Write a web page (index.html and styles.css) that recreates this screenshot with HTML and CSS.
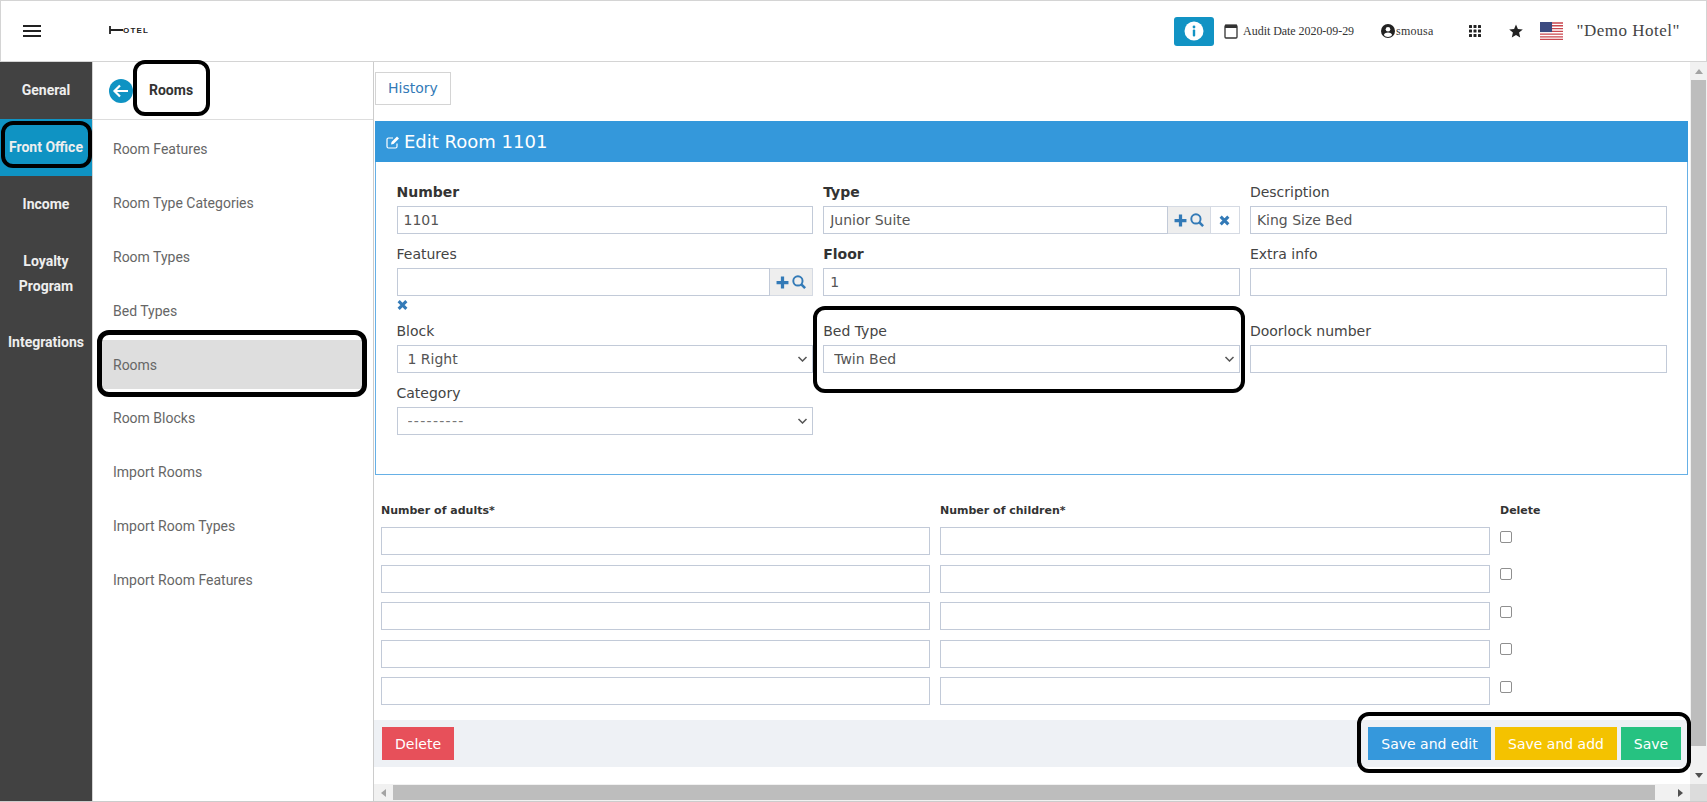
FILE: index.html
```html
<!DOCTYPE html>
<html lang="en">
<head>
<meta charset="utf-8">
<title>Edit Room 1101</title>
<link rel="stylesheet" href="styles.css">
</head>
<body>
<div class="app">
  <header class="topbar">
    <button class="burger" aria-label="Menu"><span></span><span></span><span></span></button>
    <div class="logo">
      <svg class="logo-bed" width="14" height="8" viewBox="0 0 14 8"><path d="M1 0v8M1 4h13" stroke="#222" stroke-width="1.8" fill="none"/></svg>
      <span>OTEL</span>
    </div>
    <div class="top-right">
      <span class="info-btn"><svg width="20" height="20" viewBox="0 0 20 20"><circle cx="10" cy="10" r="9.5" fill="#fff"/><circle cx="10" cy="6" r="1.4" fill="#1193c4"/><rect x="8.8" y="8.6" width="2.4" height="7" rx="1" fill="#1193c4"/></svg></span>
      <span class="audit">
        <svg width="14" height="16" viewBox="0 0 14 16"><rect x="1" y="2.5" width="12" height="12.5" fill="none" stroke="#333" stroke-width="1.3" rx="1"/><rect x="1" y="1.5" width="12" height="3.5" fill="#333"/></svg>
        <span>Audit Date 2020-09-29</span>
      </span>
      <span class="user">
        <svg width="14" height="14" viewBox="0 0 14 14"><circle cx="7" cy="7" r="7" fill="#222"/><circle cx="7" cy="5.2" r="2.3" fill="#fff"/><path d="M2.8 11c.8-1.8 2.5-2.5 4.2-2.5s3.400.7 4.200 2.500c-1 1.200-2.500 1.900-4.200 1.900s-3.200-.7-4.200-1.900z" fill="#fff"/></svg>
        <span>smousa</span>
      </span>
      <svg class="apps" width="12" height="12" viewBox="0 0 12 12" fill="#222"><rect width="3" height="3" rx=".5"/><rect x="4.500" width="3" height="3" rx=".5"/><rect x="9" width="3" height="3" rx=".5"/><rect y="4.500" width="3" height="3" rx=".5"/><rect x="4.500" y="4.500" width="3" height="3" rx=".5"/><rect x="9" y="4.500" width="3" height="3" rx=".5"/><rect y="9" width="3" height="3" rx=".5"/><rect x="4.500" y="9" width="3" height="3" rx=".5"/><rect x="9" y="9" width="3" height="3" rx=".5"/></svg>
      <svg class="star" width="14" height="14" viewBox="0 0 14 14"><path d="M7 .5l1.900 4.500 4.900.4-3.700 3.200 1.100 4.800L7 10.900l-4.200 2.500 1.100-4.800L.2 5.400l4.900-.4z" fill="#222"/></svg>
      <svg class="flag" width="23" height="18" viewBox="0 0 21 17" preserveAspectRatio="none"><rect width="21" height="17" fill="#fff"/><path d="M0 1h21M0 3.600h21M0 6.200h21M0 8.800h21M0 11.400h21M0 14h21M0 16.500h21" stroke="#c9474f" stroke-width="1.300"/><rect width="11" height="9.500" fill="#3c4a80"/></svg>
      <span class="hotel">"Demo Hotel"</span>
    </div>
  </header>

  <div class="body-row">
    <nav class="rail">
      <a class="rail-item">General</a>
      <a class="rail-item is-active">Front Office</a>
      <a class="rail-item">Income</a>
      <a class="rail-item">Loyalty Program</a>
      <a class="rail-item">Integrations</a>
    </nav>

    <aside class="submenu">
      <div class="sub-head">
        <svg class="back" width="24" height="24" viewBox="0 0 24 24"><circle cx="12" cy="12" r="12" fill="#0f93c3"/><path d="M19 12H6M11 6.500L5.500 12l5.500 5.500" stroke="#fff" stroke-width="2.200" fill="none"/></svg>
        <strong>Rooms</strong>
      </div>
      <ul class="sub-list">
        <li>Room Features</li>
        <li>Room Type Categories</li>
        <li>Room Types</li>
        <li>Bed Types</li>
        <li class="is-current">Rooms</li>
        <li>Room Blocks</li>
        <li>Import Rooms</li>
        <li>Import Room Types</li>
        <li>Import Room Features</li>
      </ul>
    </aside>

    <main class="main">
      <div class="main-inner">
        <div class="content">
          <a class="history">History</a>
          <section class="panel">
            <h2 class="panel-title">
              <svg width="14" height="14" viewBox="0 0 14 14" fill="none" stroke="#fff" stroke-width="1.200"><path d="M11 8.500v3a1.500 1.500 0 0 1-1.500 1.500h-7A1.500 1.500 0 0 1 1 11.500v-7A1.500 1.500 0 0 1 2.500 3H7"/><path d="M5.500 7l-.5 2.500 2.500-.5 5.500-5.500-2-2z" fill="#fff" stroke="none"/></svg>
              Edit Room 1101
            </h2>
            <div class="form-grid">
              <div class="field">
                <label class="req">Number</label>
                <input type="text" value="1101">
              </div>
              <div class="field">
                <label class="req">Type</label>
                <div class="combo">
                  <input type="text" value="Junior Suite">
                  <span class="addon">
                    <svg width="13" height="13" viewBox="0 0 12 12"><path d="M6 .5v11M.5 6h11" stroke="#337ab7" stroke-width="3"/></svg>
                    <svg width="14" height="14" viewBox="0 0 13 13" fill="none" stroke="#337ab7" stroke-width="1.800"><circle cx="5.500" cy="5.500" r="4.300"/><path d="M8.700 8.700l3.500 3.500" stroke-width="2.400"/></svg>
                  </span>
                  <span class="clear"><svg width="11" height="11" viewBox="0 0 10 10"><path d="M1.500 1.500l7 7M8.500 1.500l-7 7" stroke="#337ab7" stroke-width="2.800"/></svg></span>
                </div>
              </div>
              <div class="field">
                <label>Description</label>
                <input type="text" value="King Size Bed">
              </div>

              <div class="field">
                <label>Features</label>
                <div class="combo">
                  <input type="text">
                  <span class="addon">
                    <svg width="13" height="13" viewBox="0 0 12 12"><path d="M6 .5v11M.5 6h11" stroke="#337ab7" stroke-width="3"/></svg>
                    <svg width="14" height="14" viewBox="0 0 13 13" fill="none" stroke="#337ab7" stroke-width="1.800"><circle cx="5.500" cy="5.500" r="4.300"/><path d="M8.700 8.700l3.500 3.500" stroke-width="2.400"/></svg>
                  </span>
                </div>
                <svg class="below-x" width="11" height="11" viewBox="0 0 10 10"><path d="M1.500 1.500l7 7M8.500 1.500l-7 7" stroke="#337ab7" stroke-width="2.800"/></svg>
              </div>
              <div class="field">
                <label class="req">Floor</label>
                <input type="text" value="1">
              </div>
              <div class="field">
                <label>Extra info</label>
                <input type="text">
              </div>

              <div class="field">
                <label>Block</label>
                <div class="select-wrap">
                  <select><option>1 Right</option></select>
                  <svg class="chev" width="11" height="6" viewBox="0 0 10 6"><path d="M1 1l4 4 4-4" fill="none" stroke="#555" stroke-width="1.500"/></svg>
                </div>
              </div>
              <div class="field">
                <label>Bed Type</label>
                <div class="select-wrap">
                  <select><option>Twin Bed</option></select>
                  <svg class="chev" width="11" height="6" viewBox="0 0 10 6"><path d="M1 1l4 4 4-4" fill="none" stroke="#555" stroke-width="1.500"/></svg>
                </div>
              </div>
              <div class="field">
                <label>Doorlock number</label>
                <input type="text">
              </div>

              <div class="field">
                <label>Category</label>
                <div class="select-wrap">
                  <select class="dashes"><option>---------</option></select>
                  <svg class="chev" width="11" height="6" viewBox="0 0 10 6"><path d="M1 1l4 4 4-4" fill="none" stroke="#555" stroke-width="1.500"/></svg>
                </div>
              </div>
            </div>
          </section>

          <div class="beds">
            <div class="beds-head">Number of adults*</div>
            <div class="beds-head">Number of children*</div>
            <div class="beds-head">Delete</div>
            <input type="text"><input type="text"><input type="checkbox">
            <input type="text"><input type="text"><input type="checkbox">
            <input type="text"><input type="text"><input type="checkbox">
            <input type="text"><input type="text"><input type="checkbox">
            <input type="text"><input type="text"><input type="checkbox">
          </div>

          <div class="actions">
            <button class="btn btn-red">Delete</button>
            <div class="actions-right">
              <button class="btn btn-blue">Save and edit</button>
              <button class="btn btn-yellow">Save and add</button>
              <button class="btn btn-green">Save</button>
            </div>
          </div>
        </div>
        <div class="vbar">
          <span class="sb-btn"><i class="arr arr-up"></i></span>
          <span class="vthumb"></span>
          <span class="sb-btn"><i class="arr arr-down"></i></span>
        </div>
      </div>
      <div class="hbar">
        <span class="sb-btn-h"><i class="arr arr-left"></i></span>
        <span class="hthumb"></span>
        <span class="sb-btn-h"><i class="arr arr-right"></i></span>
        <span class="corner"></span>
      </div>
    </main>
  </div>
</div>

<span class="mark mark-title"></span>
<span class="mark mark-front"></span>
<span class="mark mark-rooms"></span>
<span class="mark mark-bed"></span>
<span class="mark mark-save"></span>
</body>
</html>
```
FILE: styles.css
```css
* { box-sizing: border-box; }
html, body { margin: 0; height: 100%; overflow: hidden; background: #fff; }
body { font-family: "DejaVu Sans", sans-serif; color: #333; }
.app { display: flex; flex-direction: column; height: 802px; border-bottom: 1px solid #ccc; }

.topbar { height: 62px; flex: none; display: flex; align-items: center; border: 1px solid #d4d4d4; background: #fff; }
.burger { width: 18px; height: 12px; margin-left: 22px; padding: 0; border: 0; background: none; display: flex; flex-direction: column; justify-content: space-between; }
.burger span { display: block; height: 2px; background: #222; }
.logo { display: flex; align-items: center; margin-left: 68px; margin-top: -2px; font: 700 8px "Liberation Sans", sans-serif; letter-spacing: 1.200px; color: #222; }
.top-right { margin-left: auto; display: flex; align-items: center; font-family: "Liberation Serif", serif; color: #333; }
.info-btn { width: 40px; height: 29px; background: #1193c4; border-radius: 3px; display: flex; align-items: center; justify-content: center; }
.audit { display: flex; align-items: center; gap: 5px; margin-left: 10px; font-size: 12px; letter-spacing: -.05px; }
.user { display: flex; align-items: center; gap: 1px; margin-left: 27px; font-size: 12px; letter-spacing: .25px; }
.apps { margin-left: 35px; }
.star { margin-left: 28px; }
.flag { margin-left: 17px; }
.hotel { margin-left: 14px; margin-right: 26px; font-size: 17px; letter-spacing: .5px; color: #444; }

.body-row { flex: 1; min-height: 0; display: flex; }

.rail { width: 93px; flex: none; background: #424242; border-right: 1px solid #d4d4d4; }
.rail-item { display: block; padding: 16px 2px; text-align: center; font: 700 14px/25px Roboto, sans-serif; color: #eee; }
.rail-item.is-active { background: #0f93c3; }
.rail-item:nth-child(4) { padding: 16px 14px 15px; }

.submenu { width: 281px; flex: none; border-right: 1px solid #ccc; background: #fff; }
.sub-head { height: 58px; display: flex; align-items: center; padding-left: 16px; border-bottom: 1px solid #ddd; }
.sub-head strong { margin: -1px 0 0 16px; font: 700 14px Roboto, sans-serif; color: #333; }
.back { flex: none; margin-top: 1px; }
.sub-list { list-style: none; margin: 4px 0 0; padding: 0; font: 14px Roboto, sans-serif; color: #666; }
.sub-list li { height: 49.900px; margin: 0 10px 4px 8px; padding-left: 12px; display: flex; align-items: center; border-radius: 2px; }
.sub-list .is-current { background: #dedede; }

.main { flex: 1; min-width: 0; display: flex; flex-direction: column; }
.main-inner { flex: 1; min-height: 0; display: flex; }
.content { flex: 1; min-width: 0; padding: 10px 0 0 0; }

.history { display: inline-block; height: 33px; margin-left: 1px; padding: 0 12px; border: 1px solid #d4d4d4; font-size: 14px; line-height: 31px; color: #337ab7; }
.panel { margin: 16px 2px 0 1px; border: 1px solid #66b0e6; border-top: 0; }
.panel-title { height: 41px; margin: 0 -1px; padding-left: 11px; display: flex; align-items: center; gap: 4px; background: #3498db; color: #fff; font-size: 18px; font-weight: 400; }
.form-grid { display: grid; grid-template-columns: repeat(3, 416.700px); column-gap: 10px; padding: 20px 20px 29px 20.500px; align-items: start; }
.field { display: flex; flex-direction: column; margin-bottom: 10px; }
.field label { font-size: 14px; line-height: 20px; margin-bottom: 4px; color: #444; }
.field label.req { font-weight: 700; color: #333; }
.form-grid input[type=text], .form-grid select { height: 28px; width: 100%; }
input[type=text], select { border: 1px solid #c2cad8; background: #fff; font: 14px "DejaVu Sans", sans-serif; color: #555; padding: 0 6px; border-radius: 0; outline: 0; }
select { appearance: none; padding-left: 10px; }
.select-wrap { position: relative; height: 28px; }
.chev { position: absolute; right: 5px; top: 11px; }
select.dashes { letter-spacing: 1.300px; color: #777; }
.combo { display: flex; height: 28px; }
.combo input[type=text] { flex: 1; min-width: 0; }
.addon { flex: none; width: 43px; display: flex; align-items: center; justify-content: center; gap: 3px; background: #eee; border: 1px solid #d5dae3; border-left: 0; }
.clear { flex: none; width: 29px; display: flex; align-items: center; justify-content: center; border: 1px solid #d5dae3; border-left: 0; }
.below-x { margin-top: 3px; height: 12px; }

.beds { display: grid; grid-template-columns: 549px 550px 1fr; column-gap: 10px; row-gap: 9.500px; padding: 27px 0 0 7px; align-items: center; }
.beds-head { height: 18px; margin-bottom: -2.500px; font-size: 11px; font-weight: 700; line-height: 18px; color: #333; }
.beds input[type=text] { height: 28px; width: 100%; }
.beds input[type=checkbox] { appearance: none; width: 12px; height: 12px; margin: 0 0 9px 0; border: 1.500px solid #8f8f8f; border-radius: 2px; background: #fff; }

.actions { display: flex; justify-content: space-between; height: 47px; margin-top: 15px; padding: 7px 9px 7px 8px; background: #eef1f5; }
.actions-right { display: flex; gap: 4px; }
.btn { height: 33px; padding: 0; border: 1px solid transparent; color: #fff; font: 14px "DejaVu Sans", sans-serif; white-space: nowrap; }
.btn-red { width: 72px; background: #e7505a; }
.btn-blue { width: 123px; background: #3598dc; }
.btn-yellow { width: 122px; background: #f4c200; }
.btn-green { width: 60px; background: #26c281; }

.vbar { width: 17px; flex: none; display: flex; flex-direction: column; background: #f1f1f1; }
.vthumb { width: 15px; height: 666px; background: #bdbdbd; display: block; margin-left: 1px; }
.sb-btn { height: 18px; display: flex; align-items: center; justify-content: center; flex: none; }
.sb-btn:last-child { margin-top: auto; }
.hbar { height: 17px; flex: none; display: flex; align-items: center; background: #f1f1f1; }
.sb-btn-h { width: 19px; height: 17px; display: flex; align-items: center; justify-content: center; flex: none; }
.hthumb { width: 1262px; height: 15px; background: #bdbdbd; }
.sb-btn-h:nth-child(3) { margin-left: auto; }
.corner { width: 17px; height: 17px; background: #dcdcdc; flex: none; }
.arr { display: block; width: 0; height: 0; border: 4px solid transparent; }
.arr-up { border-bottom: 5px solid #a3a3a3; border-top: 0; }
.arr-down { border-top: 5px solid #505050; border-bottom: 0; }
.arr-left { border-right: 5px solid #a3a3a3; border-left: 0; }
.arr-right { border-left: 5px solid #505050; border-right: 0; }

.mark { position: absolute; border: 4px solid #000; border-radius: 12px; pointer-events: none; }
.mark-title { left: 133px; top: 60px; width: 77px; height: 56px; }
.mark-front { left: 1px; top: 121px; width: 91px; height: 47px; }
.mark-rooms { left: 97px; top: 330px; width: 270px; height: 67px; border-width: 5px; }
.mark-bed { left: 813px; top: 306px; width: 432px; height: 87px; }
.mark-save { left: 1357px; top: 712px; width: 334px; height: 61px; }
```
